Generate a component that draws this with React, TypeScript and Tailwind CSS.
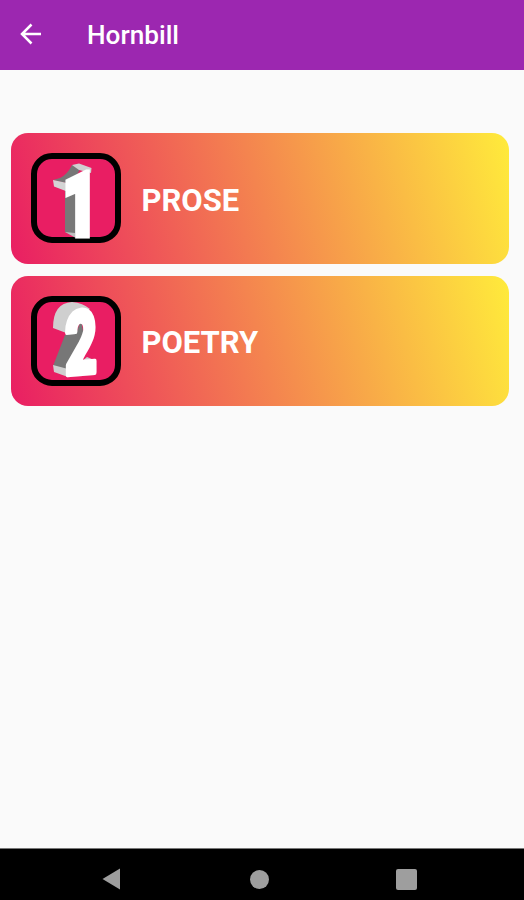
import React from 'react';

interface Chapter {
    title: string;
    icon: React.ReactNode;
}

// Extruded "1": the sides are shaded polygons, the front face is the digit itself
const NumberOne: React.FC = () => (
    <svg viewBox="0 0 90 90" className="h-[90px] w-[90px] overflow-visible">
        <path d="M22 27 L29 25 Q36 22 41 12 L50 14 L46 22 Q42 27 35 30 Z" fill="#777777" />
        <path d="M41 12 L48 10.500 L60.500 15 L60 20 L48 17 Z" fill="#d0d0d0" />
        <path d="M22 27 L36 30 L36 38.500 L23 33.500 Z" fill="#d4d4d4" />
        <path d="M34 38 L46 38 L46 84 L34 79 Z" fill="#787878" />
        <path d="M34 79 L44 80 L44 84.500 Z" fill="#bdbdbd" />
        <text
            transform="translate(32 81.500) scale(0.68 1)"
            fontSize="88"
            stroke="#ffffff"
            strokeWidth="7"
            className="fill-white font-[Roboto] font-black"
        >
            1
        </text>
    </svg>
);

const NumberTwo: React.FC = () => (
    <svg viewBox="0 0 90 90" className="h-[90px] w-[90px] overflow-visible">
        <path d="M22 32 Q22 7 41 6 Q52 7 59 13 L48 20 L38 38 Z" fill="#cfcfcf" />
        <path d="M34 39 L46 35 L50 24 L53 40 L38 77 L22 70 Z" fill="#777777" />
        <path d="M22 69 L37 73 L37 81 L23 76 Z" fill="#cfcfcf" />
        <path d="M50 66 L56 61 L65.500 65 L55 69 Z" fill="#cfcfcf" />
        <text
            transform="translate(34 79) skewY(-5) scale(0.63 1)"
            fontSize="88"
            stroke="#ffffff"
            strokeWidth="5"
            strokeLinejoin="round"
            className="fill-white font-[Roboto] font-black"
        >
            2
        </text>
    </svg>
);

const chapters: Chapter[] = [
    { title: 'PROSE', icon: <NumberOne /> },
    { title: 'POETRY', icon: <NumberTwo /> },
];

const ChapterCard: React.FC<Chapter> = ({ title, icon }) => {
    return (
        <button className="flex h-[130.500px] w-full items-center rounded-[17px] bg-[linear-gradient(75.3deg,#e91e63,#ffeb3b)] pl-5 text-left">
            <span className="flex h-[90px] w-[90px] shrink-0 items-center justify-center rounded-[21px] border-[6px] border-black bg-[#e91e63]">
                <span className="-m-1.5 block shrink-0">{icon}</span>
            </span>
            <span className="ml-[21px] pt-[5px] text-[31px] leading-9 font-bold text-white">{title}</span>
        </button>
    );
};

const App: React.FC = () => {
    return (
        <div className="flex h-[900px] w-full flex-col bg-[#fafafa] font-[Roboto,sans-serif]">
            <header className="flex h-[69.500px] shrink-0 items-center bg-[#9c27b0] pl-[20px] text-white">
                <svg viewBox="0 0 22 22" className="-mt-px h-[22px] w-[22px]" fill="none" stroke="currentColor" strokeWidth="2.500">
                    <path d="M11.500 1.500 L2 11 L11.500 20.500 M2 11 H21" />
                </svg>
                <h1 className="ml-[45px] text-[26.200px] leading-8 font-medium">Hornbill</h1>
            </header>

            <main className="flex flex-1 flex-col gap-3 pt-[63.500px] pr-[15.500px] pl-[10.500px]">
                {chapters.map((chapter) => (
                    <ChapterCard key={chapter.title} title={chapter.title} icon={chapter.icon} />
                ))}
            </main>

            {/* System navigation */}
            <nav className="flex h-[52px] shrink-0 items-center border-t border-[#777777] bg-black pt-[9px] pl-[102px] text-[#9e9e9e]">
                <svg viewBox="0 0 19 22" className="h-[22px] w-[19px]" fill="currentColor">
                    <path d="M0.500 11 L18 0.500 V21.500 Z" />
                </svg>
                <span className="ml-[129px] h-[19px] w-[19px] rounded-full bg-[#9e9e9e]" />
                <span className="ml-[127px] h-[21px] w-[21px] rounded-[2px] bg-[#9e9e9e]" />
            </nav>
        </div>
    );
};

export default App;
